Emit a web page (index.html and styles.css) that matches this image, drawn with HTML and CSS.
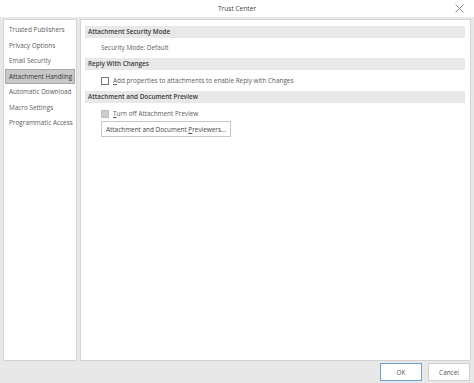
FILE: index.html
```html
<!DOCTYPE html>
<html>
<head>
<meta charset="utf-8">
<link rel="stylesheet" href="styles.css">
</head>
<body>
<div class="dialog">
  <div class="titlebar">
    <span class="title">Trust Center</span>
    <svg class="close" width="9" height="9" viewBox="0 0 9 9"><path d="M0.5 0.5 L8.5 8.5 M8.5 0.5 L0.5 8.5" stroke="#777" stroke-width="0.8" fill="none"/></svg>
  </div>
  <div class="body">
    <div class="nav">
      <div class="nav-item">Trusted Publishers</div>
      <div class="nav-item">Privacy Options</div>
      <div class="nav-item">Email Security</div>
      <div class="nav-item selected">Attachment Handling</div>
      <div class="nav-item">Automatic Download</div>
      <div class="nav-item">Macro Settings</div>
      <div class="nav-item">Programmatic Access</div>
    </div>
    <div class="content">
      <div class="section-head">Attachment Security Mode</div>
      <div class="line">Security Mode: Default</div>
      <div class="section-head">Reply With Changes</div>
      <label class="check"><span class="box"></span><span><u>A</u>dd properties to attachments to enable Reply with Changes</span></label>
      <div class="section-head">Attachment and Document Preview</div>
      <label class="check"><span class="box disabled"></span><span><u>T</u>urn off Attachment Preview</span></label>
      <div class="btn-row"><button class="btn">Attachment and Document <u>P</u>reviewers...</button></div>
    </div>
  </div>
  <div class="footer">
    <button class="fbtn ok">OK</button>
    <button class="fbtn">Cancel</button>
  </div>
</div>
</body>
</html>
```
FILE: styles.css
```css
* { box-sizing: border-box; }
html, body { margin: 0; padding: 0; }
body {
  width: 474px;
  height: 383px;
  overflow: hidden;
  font-family: "Open Sans", "Noto Sans", sans-serif;
  font-size: 6.4px;
  color: #5c5c5c;
  background: #e8e8e8;
}
.dialog {
  display: flex;
  flex-direction: column;
  height: 383px;
}
.titlebar {
  height: 17px;
  background: #fff;
  position: relative;
  display: flex;
  align-items: center;
  justify-content: center;
}
.title { font-size: 6.6px; color: #444; }
.close { position: absolute; right: 10px; top: 4px; }
.body {
  flex: 1;
  display: flex;
  gap: 3px;
  padding: 2px 3px 0 3px;
}
.nav {
  width: 74px;
  background: #fff;
  border: 1px solid #d4d4d4;
  padding: 2px 1px;
}
.nav-item {
  height: 15.5px;
  line-height: 15.5px;
  padding-left: 4px;
  white-space: nowrap;
  color: #5c5c5c;
}
.nav-item.selected {
  background: #c8c8c8;
  border: 1px solid #a8a8a8;
  color: #333;
  line-height: 13.5px;
  padding-left: 3px;
}
.content {
  flex: 1;
  background: #fff;
  border: 1px solid #d4d4d4;
  padding: 6px 5px 0 4px;
}
.section-head {
  background: #e8e8e8;
  height: 12px;
  line-height: 12px;
  padding-left: 3px;
  font-weight: 600;
  color: #3a3a3a;
}
.line {
  height: 20px;
  line-height: 20px;
  padding-left: 16px;
}
.check {
  display: flex;
  align-items: center;
  gap: 4px;
  height: 21px;
  padding-left: 16px;
}
.box {
  width: 8px;
  height: 8px;
  border: 1px solid #777;
  background: #fff;
}
.box.disabled { border-color: #bbb; background: #ccc; }
.btn-row { padding-left: 16px; margin-top: -3px; }
.btn {
  font: inherit;
  color: #444;
  background: #fff;
  border: 1px solid #c8c8c8;
  height: 16px;
  padding: 0 4px;
}
.footer {
  height: 22px;
  display: flex;
  justify-content: flex-end;
  align-items: center;
  gap: 6px;
  padding-right: 4px;
}
.fbtn {
  font: inherit;
  color: #555;
  width: 42px;
  height: 18px;
  background: #fff;
  border: 1px solid #d0d0d0;
}
.fbtn.ok { border-color: #6fa0d0; }
```
